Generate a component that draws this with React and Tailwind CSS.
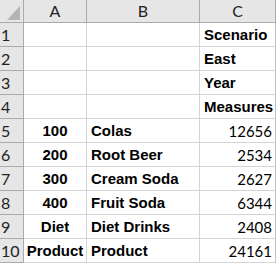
const rows = [
    {a: "", b: "", c: "Scenario", num: false},
    {a: "", b: "", c: "East", num: false},
    {a: "", b: "", c: "Year", num: false},
    {a: "", b: "", c: "Measures", num: false},
    {a: "100", b: "Colas", c: "12656", num: true},
    {a: "200", b: "Root Beer", c: "2534", num: true},
    {a: "300", b: "Cream Soda", c: "2627", num: true},
    {a: "400", b: "Fruit Soda", c: "6344", num: true},
    {a: "Diet", b: "Diet Drinks", c: "2408", num: true},
    {a: "Product", b: "Product", c: "24161", num: true},
];

const headFont = "font-['Lato','Open_Sans',sans-serif]";
const boldFont = "font-['Liberation_Sans',Arial,sans-serif] font-bold";

const App = () => {
    return (
        <div className="w-[277px] h-[263px] bg-white overflow-hidden">
            <div className="grid grid-cols-[24px_63px_113px_76px] grid-rows-[23px_repeat(10,24px)] text-[15px] text-black">
                {/* corner */}
                <div className="bg-[#e6e6e6] border-r border-b border-[#ababab] flex items-end justify-end pr-[3px] pb-[2px]">
                    <svg width="13" height="14" viewBox="0 0 13 14">
                        <polygon points="13,0 13,14 0,14" fill="#b4b4b4" />
                    </svg>
                </div>
                {["A", "B", "C"].map((h) => (
                    <div
                        key={h}
                        className={`bg-[#e6e6e6] border-r border-b border-[#ababab] flex items-center justify-center ${headFont} text-[16px] text-[#222]`}
                    >
                        {h}
                    </div>
                ))}

                {rows.map((r, i) => (
                    <div key={i} className="contents">
                        <div className={`bg-[#e6e6e6] border-r border-b border-[#ababab] flex items-center pl-[1px] ${headFont} text-[16px] text-[#222]`}>
                            {i + 1}
                        </div>
                        <div className={`border-r border-b border-[#d4d4d4] flex items-center justify-center pt-[2px] ${boldFont}`}>
                            {r.a}
                        </div>
                        <div className={`border-r border-b border-[#d4d4d4] flex items-center pl-[4px] pt-[2px] whitespace-nowrap ${boldFont}`}>
                            {r.b}
                        </div>
                        {r.num ? (
                            <div className={`border-r border-r-[#c0c0c0] border-b border-b-[#d4d4d4] flex items-center justify-end pr-[3px] pt-[2px] ${headFont}`}>
                                {r.c}
                            </div>
                        ) : (
                            <div className={`border-r border-r-[#c0c0c0] border-b border-b-[#d4d4d4] flex items-center pl-[4px] pt-[2px] ${boldFont}`}>
                                {r.c}
                            </div>
                        )}
                    </div>
                ))}
            </div>
        </div>
    );
};

export default App;
